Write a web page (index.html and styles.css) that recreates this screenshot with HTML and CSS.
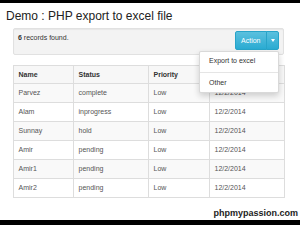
FILE: index.html
```html
<!DOCTYPE html>
<html>
<head>
<meta charset="utf-8">
<link rel="stylesheet" href="styles.css">
</head>
<body>
<div class="topbar"></div>
<main class="page">
  <h1 class="title">Demo : PHP export to excel file</h1>
  <div class="well">
    <p class="count"><b>6</b> records found.</p>
    <div class="btn-group">
      <button class="btn btn-main">Action</button><button class="btn btn-caret"><span class="caret"></span></button>
      <ul class="menu">
        <li class="menu-item">Export to excel</li>
        <li class="divider"></li>
        <li class="menu-item">Other</li>
      </ul>
    </div>
  </div>
  <table class="grid">
    <colgroup><col class="c1"><col class="c2"><col class="c3"><col class="c4"></colgroup>
    <thead>
      <tr><th>Name</th><th>Status</th><th>Priority</th><th>Date</th></tr>
    </thead>
    <tbody>
      <tr><td>Parvez</td><td>complete</td><td>Low</td><td>12/2/2014</td></tr>
      <tr><td>Alam</td><td>inprogress</td><td>Low</td><td>12/2/2014</td></tr>
      <tr><td>Sunnay</td><td>hold</td><td>Low</td><td>12/2/2014</td></tr>
      <tr><td>Amir</td><td>pending</td><td>Low</td><td>12/2/2014</td></tr>
      <tr><td>Amir1</td><td>pending</td><td>Low</td><td>12/2/2014</td></tr>
      <tr><td>Amir2</td><td>pending</td><td>Low</td><td>12/2/2014</td></tr>
    </tbody>
  </table>
  <div class="brand">phpmypassion.com</div>
</main>
<div class="bottombar"></div>
</body>
</html>
```

FILE: styles.css
```css
html, body {
  margin: 0;
  padding: 0;
  background: #fff;
}
body {
  height: 225px;
  display: flex;
  flex-direction: column;
  overflow: hidden;
  font-family: "Liberation Sans", Arial, sans-serif;
  color: #333;
}
.topbar {
  height: 3px;
  background: #000;
  flex: none;
}
.bottombar {
  height: 5px;
  background: #000;
  flex: none;
}
.page {
  flex: 1;
  overflow: hidden;
  padding-left: 6px;
}
.title {
  margin: 6px 0 0;
  font-size: 12px;
  line-height: 15px;
  font-weight: normal;
  color: #222;
}
.well {
  margin: 4px 0 0 7px;
  width: 271px;
  box-sizing: border-box;
  padding: 2px 4px 4px 4px;
  background: #f3f3f3;
  border: 1px solid #e1e1e1;
  border-radius: 2px;
  box-shadow: inset 0 1px 1px rgba(0,0,0,0.05);
  display: flex;
  justify-content: space-between;
  align-items: flex-start;
}
.count {
  margin: 2px 0 0;
  font-size: 7px;
  line-height: 10px;
  color: #333;
}
.btn-group {
  position: relative;
  display: flex;
}
.btn {
  font-family: "Liberation Sans", Arial, sans-serif;
  font-size: 7px;
  line-height: 10px;
  height: 19px;
  box-sizing: border-box;
  padding: 0 5.5px;
  color: #fff;
  background: linear-gradient(#5bc0de, #2aabd2);
  border: 1px solid #28a4c9;
  margin: 0;
}
.btn-main {
  border-radius: 2px 0 0 2px;
}
.btn-caret {
  width: 13px;
  padding: 0;
  margin-left: -1px;
  border-radius: 0 2px 2px 0;
  display: flex;
  align-items: center;
  justify-content: center;
}
.caret {
  width: 0;
  height: 0;
  border-top: 3px solid #fff;
  border-left: 2.5px solid transparent;
  border-right: 2.5px solid transparent;
}
.menu {
  position: absolute;
  top: calc(100% + 1px);
  right: 0;
  width: 80px;
  box-sizing: border-box;
  margin: 0;
  padding: 3px 0;
  list-style: none;
  background: #fff;
  border: 1px solid rgba(0,0,0,0.15);
  border-radius: 2px;
  box-shadow: 0 3px 6px rgba(0,0,0,0.175);
  z-index: 2;
}
.menu-item {
  padding: 1px 9px;
  font-size: 7px;
  line-height: 10px;
  color: #333;
  white-space: nowrap;
}
.divider {
  height: 1px;
  margin: 5px 0 4px;
  background: #e5e5e5;
}
.grid {
  margin: 10px 0 0 7px;
  width: 271px;
  table-layout: fixed;
  border-collapse: collapse;
  font-size: 7px;
  line-height: 10px;
}
.c1 { width: 60px; }
.c2 { width: 75px; }
.c3 { width: 61px; }
.c4 { width: 75px; }
.grid th, .grid td {
  border: 1px solid #ddd;
  text-align: left;
  padding: 4px 4.5px;
  white-space: nowrap;
  overflow: hidden;
}
.grid th {
  padding-top: 3.5px;
  padding-bottom: 3.5px;
  font-weight: bold;
  color: #333;
  background: #f7f7f7;
}
.grid td {
  color: #555;
}
.grid tbody tr:nth-child(odd) td {
  background: #f9f9f9;
}
.brand {
  margin-top: 10px;
  padding-right: 2px;
  text-align: right;
  font-size: 9px;
  line-height: 10px;
  font-weight: bold;
  color: #222;
}
```
